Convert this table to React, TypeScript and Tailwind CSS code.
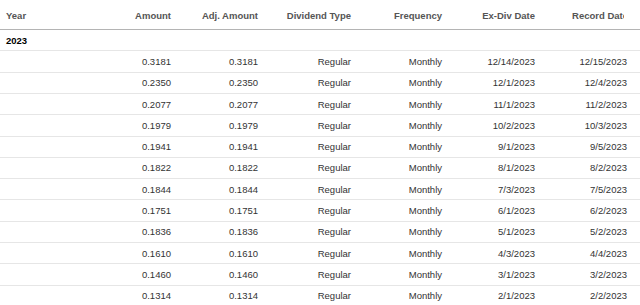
import React from "react";

const rows = [
  ["0.3181", "0.3181", "Regular", "Monthly", "12/14/2023", "12/15/2023"],
  ["0.2350", "0.2350", "Regular", "Monthly", "12/1/2023", "12/4/2023"],
  ["0.2077", "0.2077", "Regular", "Monthly", "11/1/2023", "11/2/2023"],
  ["0.1979", "0.1979", "Regular", "Monthly", "10/2/2023", "10/3/2023"],
  ["0.1941", "0.1941", "Regular", "Monthly", "9/1/2023", "9/5/2023"],
  ["0.1822", "0.1822", "Regular", "Monthly", "8/1/2023", "8/2/2023"],
  ["0.1844", "0.1844", "Regular", "Monthly", "7/3/2023", "7/5/2023"],
  ["0.1751", "0.1751", "Regular", "Monthly", "6/1/2023", "6/2/2023"],
  ["0.1836", "0.1836", "Regular", "Monthly", "5/1/2023", "5/2/2023"],
  ["0.1610", "0.1610", "Regular", "Monthly", "4/3/2023", "4/4/2023"],
  ["0.1460", "0.1460", "Regular", "Monthly", "3/1/2023", "3/2/2023"],
  ["0.1314", "0.1314", "Regular", "Monthly", "2/1/2023", "2/2/2023"],
];

const cols = "grid grid-cols-[100px_71px_87px_93px_91px_93px_92px_13px] items-center";

export default function App() {
  return (
    <div className="w-[640px] h-[305px] overflow-hidden bg-white font-['Liberation_Sans',Arial,sans-serif] text-[9.5px]">
      <div className={`${cols} h-[30px] pt-[3px] border-b-[1.5px] border-[#b4b4b4] font-bold text-[#555]`}>
        <div className="pl-[6px]">Year</div>
        <div className="text-right">Amount</div>
        <div className="text-right">Adj. Amount</div>
        <div className="text-right">Dividend Type</div>
        <div className="text-right">Frequency</div>
        <div className="text-right">Ex-Div Date</div>
        <div className="overflow-hidden mr-[3px]">
          <div className="text-right whitespace-nowrap mr-[-4px]">Record Date</div>
        </div>
        <div />
      </div>
      <div className="h-[21.4px] flex items-center pt-[1px] border-b border-[#e6e6e6] pl-[6px] font-bold text-black">
        2023
      </div>
      {rows.map((r, i) => (
        <div key={i} className={`${cols} h-[21.3px] pt-[1px] border-b border-[#e6e6e6] text-[#333]`}>
          <div />
          {r.map((c, j) => (
            <div key={j} className="text-right">
              {c}
            </div>
          ))}
          <div />
        </div>
      ))}
    </div>
  );
}
